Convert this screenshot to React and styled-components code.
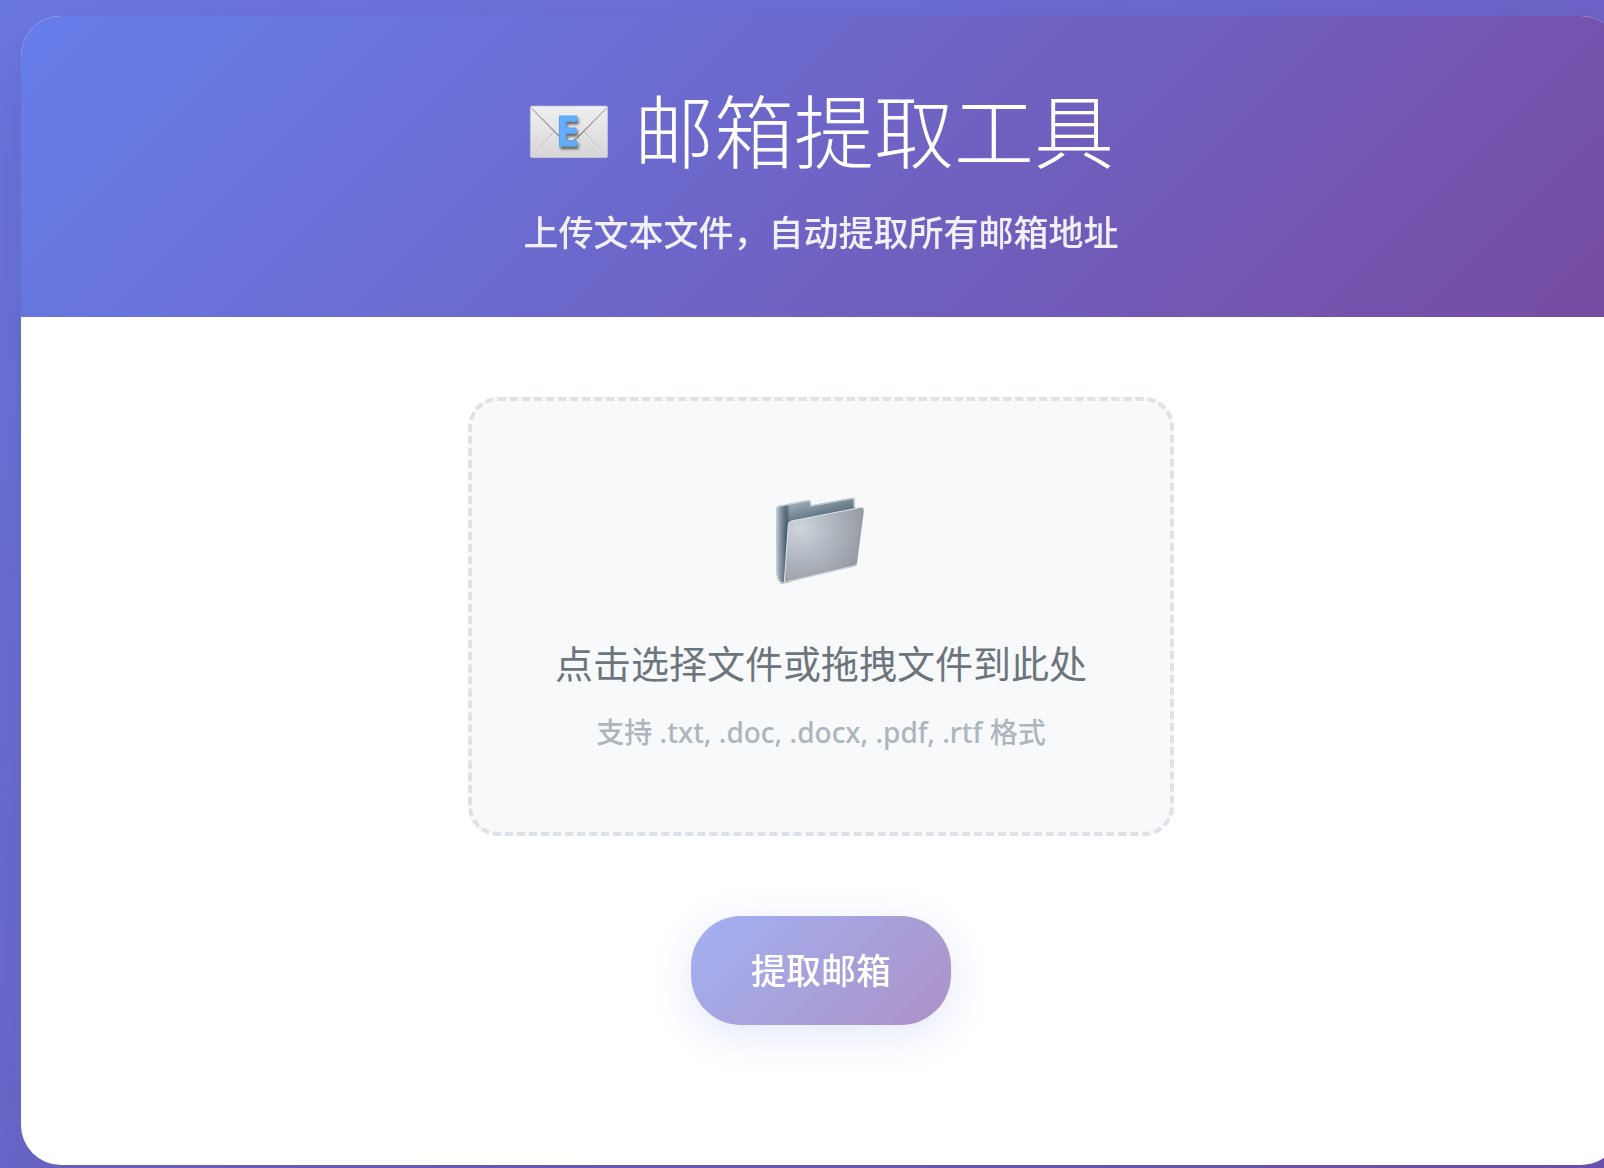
import { useState } from "react";
import styled, { createGlobalStyle } from "styled-components";

const GlobalStyle = createGlobalStyle`
  * {
    margin: 0;
    padding: 0;
    box-sizing: border-box;
  }
  body {
    font-family: "Noto Sans", "Noto Sans CJK SC", sans-serif;
    overflow-x: hidden;
  }
`;

const Page = styled.div`
  min-height: 100vh;
  padding: 16px 0 3px 21px;
  overflow: hidden;
  background: linear-gradient(135deg, #6a76df 0%, #7056b8 100%);
`;

const Card = styled.main`
  margin-right: -17px;
  background: #fff;
  border-radius: 40px;
  box-shadow: 0 40px 80px rgba(0, 0, 0, 0.1);
  overflow: hidden;
`;

const Header = styled.header`
  padding: 60px 60px 64px;
  text-align: center;
  color: #fff;
  background: linear-gradient(135deg, #667eea 0%, #764ba2 100%);
`;

const Title = styled.h1`
  display: flex;
  align-items: center;
  justify-content: center;
  gap: 26px;
  margin-bottom: 30px;
  font-family: "Noto Sans CJK SC", sans-serif;
  font-size: 80px;
  font-weight: 200;
  line-height: 102px;
`;

const Subtitle = styled.p`
  font-family: "Noto Sans CJK SC", sans-serif;
  font-size: 35px;
  font-weight: 500;
  line-height: 45px;
  opacity: 0.9;
`;

const Content = styled.form`
  display: flex;
  flex-direction: column;
  align-items: center;
  padding: 80px 80px 140px;
`;

const UploadArea = styled.label`
  display: flex;
  flex-direction: column;
  align-items: center;
  width: 706px;
  max-width: 100%;
  margin-bottom: 80px;
  padding: 80px 0;
  border: 4px dashed #dee2e6;
  border-radius: 30px;
  background: #f8f9fb;
  cursor: pointer;
`;

const FileInput = styled.input`
  position: absolute;
  width: 1px;
  height: 1px;
  opacity: 0;
`;

const UploadText = styled.span`
  margin-bottom: 23px;
  color: #6c757d;
  font-size: 38px;
  line-height: 51px;
`;

const UploadHint = styled.span`
  color: #adb5bd;
  font-size: 28px;
  font-weight: 500;
  line-height: 40px;
`;

const ExtractButton = styled.button`
  padding: 28px 60px 32px;
  border: none;
  border-radius: 50px;
  color: #fff;
  font-family: "Noto Sans CJK SC", sans-serif;
  font-size: 35px;
  font-weight: 500;
  line-height: 49px;
  background: linear-gradient(135deg, #667eea 0%, #764ba2 100%);
  box-shadow: 0 10px 40px rgba(102, 126, 234, 0.3);
  cursor: pointer;
  &:disabled {
    opacity: 0.6;
    cursor: not-allowed;
  }
`;

const MailIcon = () => (
  <svg width="80" height="80" viewBox="39 -10 240 240" aria-hidden="true">
    <defs>
      <linearGradient id="paper" x1="0" y1="0" x2="0" y2="1">
        <stop offset="0" stopColor="#f0f0f0" />
        <stop offset="1" stopColor="#d6d6d6" />
      </linearGradient>
      <linearGradient id="fold" x1="0" y1="0" x2="0" y2="1">
        <stop offset="0" stopColor="#bdbdbf" />
        <stop offset="1" stopColor="#808083" />
      </linearGradient>
      <filter id="letterShadow" x="-30%" y="-30%" width="160%" height="160%">
        <feDropShadow dx="4" dy="8" stdDeviation="3" floodColor="#333" floodOpacity="0.7" />
      </filter>
    </defs>
    <rect x="46" y="47" width="232" height="155" rx="5" fill="url(#paper)" stroke="#c5c3d2" strokeWidth="2" />
    <path d="M52 198 L116 125 M272 198 L208 125" stroke="#bdbdbd" strokeWidth="3" />
    <path d="M54 197 L118 129 M270 197 L206 129" stroke="#f4f4f4" strokeWidth="2" />
    <path
      d="M50 54 L138 143 Q162 164 186 143 L274 54"
      fill="none"
      stroke="url(#fold)"
      strokeWidth="4"
    />
    <path
      d="M54 53 L140 139 Q162 158 184 139 L270 53"
      fill="none"
      stroke="#f8f8f8"
      strokeWidth="2"
    />
    <text
      x="122"
      y="168"
      fill="#64adfb"
      stroke="#5ba3f2"
      strokeWidth="3"
      strokeLinejoin="round"
      fontFamily="Noto Sans, sans-serif"
      fontSize="126"
      fontWeight="700"
      filter="url(#letterShadow)"
    >
      E
    </text>
  </svg>
);

const FolderSvg = styled.svg`
  display: block;
  margin-bottom: 37px;
`;

const FolderIcon = () => (
  <FolderSvg width="120" height="120" viewBox="63 33 360 360" aria-hidden="true">
    <defs>
      <linearGradient id="back" x1="0.4" y1="0" x2="0.47" y2="0.3">
        <stop offset="0" stopColor="#a3b1ba" />
        <stop offset="0.35" stopColor="#8698a4" />
        <stop offset="1" stopColor="#4f6472" />
      </linearGradient>
      <linearGradient id="spine" x1="0" y1="0" x2="1" y2="0">
        <stop offset="0" stopColor="#b0bdc5" />
        <stop offset="0.3" stopColor="#8697a3" />
        <stop offset="0.7" stopColor="#4d626f" stopOpacity="0.9" />
        <stop offset="1" stopColor="#3f5360" stopOpacity="0" />
      </linearGradient>
      <radialGradient id="front" cx="0.2" cy="0.28" r="0.95">
        <stop offset="0" stopColor="#ced4dc" />
        <stop offset="0.5" stopColor="#adb3bc" />
        <stop offset="1" stopColor="#8d9199" />
      </radialGradient>
    </defs>
    <path
      d="M109 116 Q109 109 116 107 L205 90 Q212 90 213 97 L214 106 L337 83 Q344 82 344 90 L344 280 L128 341 Q121 342 117 334 Q110 325 110 312 Z"
      fill="url(#back)"
    />
    <path
      d="M110 112 L150 102 V338 H124 Q117 334 115 328 Q110 322 110 312 Z"
      fill="url(#spine)"
    />
    <path
      d="M111 314 V117 Q111 111 117 109 L205 92 Q210 92 211 98 L213 108 L337 85 Q342 85 342 91 V112"
      fill="none"
      stroke="#c4d0d7"
      strokeWidth="4"
    />
    <path
      d="M145 164 Q146 155 155 153 L364 112 Q373 111 372 121 L351 280 Q350 286 343 288 L133 338 Z"
      fill="url(#front)"
    />
    <path
      d="M133 336 L145 164 Q146 155 155 153 L364 112 Q373 111 372 121"
      fill="none"
      stroke="#dfe5ea"
      strokeWidth="3"
    />
    <path
      d="M112 314 Q113 328 120 336 Q124 341 131 338 L343 288 Q350 286 351 280"
      fill="none"
      stroke="#ccd3d9"
      strokeWidth="4"
    />
  </FolderSvg>
);

export default function App() {
  const [file, setFile] = useState(null);

  return (
    <>
      <GlobalStyle />
      <Page>
        <Card>
          <Header>
            <Title>
              <MailIcon />
              邮箱提取工具
            </Title>
            <Subtitle>上传文本文件，自动提取所有邮箱地址</Subtitle>
          </Header>
          <Content onSubmit={(e) => e.preventDefault()}>
            <UploadArea htmlFor="file">
              <FolderIcon />
              <UploadText>点击选择文件或拖拽文件到此处</UploadText>
              <UploadHint>支持 .txt, .doc, .docx, .pdf, .rtf 格式</UploadHint>
              <FileInput
                id="file"
                type="file"
                accept=".txt,.doc,.docx,.pdf,.rtf"
                onChange={(e) => setFile(e.target.files[0])}
              />
            </UploadArea>
            <ExtractButton type="submit" disabled={!file}>
              提取邮箱
            </ExtractButton>
          </Content>
        </Card>
      </Page>
    </>
  );
}
